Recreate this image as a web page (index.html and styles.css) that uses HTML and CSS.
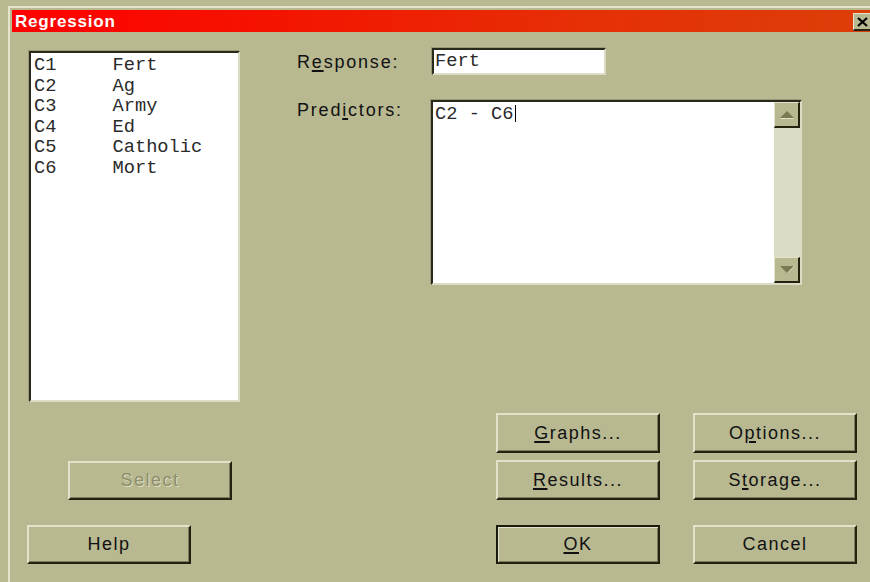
FILE: index.html
```html
<!DOCTYPE html>
<html>
<head>
<meta charset="utf-8">
<title>Regression</title>
<link rel="stylesheet" href="styles.css">
</head>
<body>
<div class="window">
  <div class="titlebar">
    <span class="title">Regression</span>
    <span class="close-btn">
      <svg width="11" height="10" viewBox="0 0 11 10"><path d="M1 1 L10 9 M10 1 L1 9" stroke="#000" stroke-width="2.2" fill="none"/></svg>
    </span>
  </div>
  <div class="content">
    <div class="left-col">
      <div class="varlist sunken">
        <div class="var-row">C1     Fert</div>
        <div class="var-row">C2     Ag</div>
        <div class="var-row">C3     Army</div>
        <div class="var-row">C4     Ed</div>
        <div class="var-row">C5     Catholic</div>
        <div class="var-row">C6     Mort</div>
      </div>
      <div class="btn btn-select disabled">Select</div>
      <div class="btn btn-help">Help</div>
    </div>
    <div class="right-col">
      <div class="field-row row-response">
        <label class="field-label">R<u>e</u>sponse:</label>
        <div class="entry sunken">Fert</div>
      </div>
      <div class="field-row row-predictors">
        <label class="field-label">Pred<u>i</u>ctors:</label>
        <div class="memo sunken">
          <div class="memo-text">C2 - C6<span class="caret"></span></div>
          <div class="vscroll">
            <div class="sb-btn"><span class="arrow-up"></span></div>
            <div class="sb-track"></div>
            <div class="sb-btn"><span class="arrow-down"></span></div>
          </div>
        </div>
      </div>
      <div class="btn-grid">
        <div class="btn"><u>G</u>raphs...</div>
        <div class="btn">O<u>p</u>tions...</div>
        <div class="btn"><u>R</u>esults...</div>
        <div class="btn">S<u>t</u>orage...</div>
        <div class="btn btn-default gap-top"><u>O</u>K</div>
        <div class="btn gap-top">Cancel</div>
      </div>
    </div>
  </div>
</div>
</body>
</html>
```

FILE: styles.css
```css
html, body {
  margin: 0;
  padding: 0;
}

body {
  width: 870px;
  height: 582px;
  overflow: hidden;
  background: #b8b891;
  font-family: "Liberation Sans", Arial, sans-serif;
  color: #111;
}

.window {
  margin: 6px 0 0 8px;
  width: 880px;
  height: 600px;
  border-left: 2px solid #e4e4cc;
  border-top: 2px solid #e4e4cc;
  padding: 2px 0 0 2px;
}

/* title bar */
.titlebar {
  height: 22px;
  display: flex;
  align-items: center;
  background: linear-gradient(to right, #ff0000 0%, #f41400 30%, #e63006 65%, #dc3f0a 100%);
}

.title {
  color: #fff;
  font-weight: bold;
  font-size: 17px;
  letter-spacing: 0.8px;
  padding-left: 3px;
  padding-top: 1px;
}

.close-btn {
  margin-left: auto;
  margin-right: 20px;
  margin-top: 2px;
  box-sizing: border-box;
  width: 19px;
  height: 18px;
  display: flex;
  align-items: center;
  justify-content: center;
  background: #b8b891;
  border-top: 1px solid #e6e6d0;
  border-left: 1px solid #e6e6d0;
  border-bottom: 2px solid #262616;
  border-right: 2px solid #262616;
}

.content {
  display: flex;
}

/* left column: variable list and buttons */
.left-col {
  width: 213px;
  padding-left: 15px;
  display: flex;
  flex-direction: column;
  align-items: flex-start;
}

.sunken {
  box-sizing: border-box;
  background: #fff;
  border-top: 2px solid #2a2a1a;
  border-left: 2px solid #2a2a1a;
  border-bottom: 2px solid #dcdcc4;
  border-right: 2px solid #dcdcc4;
  box-shadow: -1px -1px 0 #9a9a78;
  font-family: "Liberation Mono", "Courier New", monospace;
  font-size: 18.7px;
  color: #2a2a2a;
}

.varlist {
  margin-top: 19px;
  margin-left: 2px;
  width: 211px;
  height: 351px;
  padding: 2px 3px;
}

.var-row {
  line-height: 20.6px;
  white-space: pre;
}

.btn {
  box-sizing: border-box;
  width: 164px;
  height: 40px;
  display: flex;
  align-items: center;
  justify-content: center;
  font-size: 18px;
  letter-spacing: 1.5px;
  color: #111;
  background: #b8b891;
  border-top: 2px solid #e2e2ca;
  border-left: 2px solid #e2e2ca;
  border-bottom: 2px solid #22220f;
  border-right: 2px solid #22220f;
  box-shadow: inset -1px -1px 0 #7e7e5c;
}

.btn u {
  text-decoration-thickness: 1.5px;
  text-underline-offset: 2px;
}

.btn-select {
  margin-top: 59px;
  margin-left: 41px;
  height: 39px;
}

.disabled {
  color: #8e8e6a;
  text-shadow: 1px 1px 0 #dedec6;
}

.btn-help {
  margin-top: 25px;
  height: 39px;
}

/* right column: fields and action buttons */
.right-col {
  margin-left: 57px;
  display: flex;
  flex-direction: column;
}

.field-row {
  display: flex;
}

.field-label {
  font-size: 18px;
  letter-spacing: 1.8px;
  line-height: 20px;
  color: #111;
}

.field-label u {
  text-decoration-thickness: 1.5px;
  text-underline-offset: 2px;
}

.row-response {
  margin-top: 16px;
  align-items: center;
}

.row-response .field-label {
  width: 135px;
}

.entry {
  width: 174px;
  height: 27px;
  line-height: 23px;
  padding-left: 1px;
}

.row-predictors {
  margin-top: 25px;
  align-items: flex-start;
}

.row-predictors .field-label {
  width: 134px;
}

.memo {
  width: 371px;
  height: 185px;
  display: flex;
}

.memo-text {
  flex: 1;
  padding: 2px 0 0 2px;
  line-height: 20.6px;
  white-space: pre;
}

.caret {
  display: inline-block;
  width: 1px;
  height: 17px;
  background: #000;
  vertical-align: -3px;
  margin-left: 1px;
}

.vscroll {
  width: 26px;
  display: flex;
  flex-direction: column;
  background: #dcdcc6;
}

.sb-track {
  flex: 1;
}

.sb-btn {
  box-sizing: border-box;
  height: 26px;
  display: flex;
  align-items: center;
  justify-content: center;
  background: #b8b891;
  border-top: 1px solid #e2e2ca;
  border-left: 1px solid #e2e2ca;
  border-bottom: 2px solid #22220f;
  border-right: 2px solid #22220f;
}

.arrow-up {
  width: 0;
  height: 0;
  border-left: 7px solid transparent;
  border-right: 7px solid transparent;
  border-bottom: 7px solid #7a7a52;
  filter: drop-shadow(0 1px 0 #e4e4cc);
}

.arrow-down {
  width: 0;
  height: 0;
  border-left: 7px solid transparent;
  border-right: 7px solid transparent;
  border-top: 7px solid #7a7a52;
  filter: drop-shadow(1px 0 0 #e4e4cc);
}

.btn-grid {
  margin-top: 128px;
  margin-left: 199px;
  display: grid;
  grid-template-columns: 164px 164px;
  column-gap: 33px;
  row-gap: 7px;
}

.gap-top {
  margin-top: 18px;
  height: 39px;
}

.btn-default {
  border-top-color: #1a1a0c;
  border-left-color: #1a1a0c;
  box-shadow: inset 1px 1px 0 #e2e2ca, inset -1px -1px 0 #7e7e5c;
}
```
